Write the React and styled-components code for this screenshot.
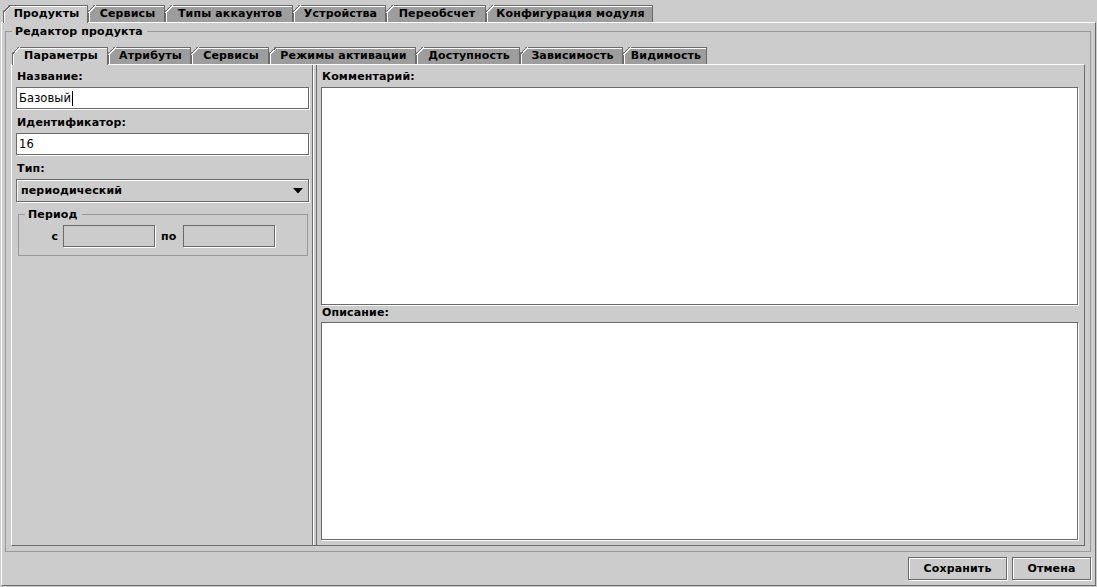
import React from 'react'
import styled, { createGlobalStyle } from 'styled-components'

const GlobalStyle = createGlobalStyle`
  html, body, #root { height: 100%; margin: 0; }
  body {
    background: #cccccc;
    font-family: "DejaVu Sans", "Liberation Sans", sans-serif;
    font-size: 11px;
    letter-spacing: 0.15px;
    color: #000;
  }
  * { box-sizing: border-box; }
`

const DARK = '#6a6a6a'

const Window = styled.div`
  height: 100%;
  display: flex;
  flex-direction: column;
  padding: 0 1px 1px 1px;
`

const TabPane = styled.div`
  flex: 1;
  min-height: 0;
  display: flex;
  flex-direction: column;
`

const TabStrip = styled.div`
  display: flex;
  align-items: flex-end;
  height: ${p => p.$top + 17}px;
  padding: ${p => p.$top}px 0 0 ${p => p.$left}px;
`

const Tab = styled.div`
  position: relative;
  z-index: ${p => (p.$active ? 2 : 1)};
  width: ${p => p.$w}px;
  height: ${p => (p.$active ? 18 : 17)}px;
  margin-bottom: ${p => (p.$active ? -1 : 0)}px;
  background: ${p => (p.$active ? '#cccccc' : '#9d9d9d')};
  border: 1px solid ${DARK};
  border-bottom: none;
  box-shadow: inset 1px 1px 0 #fff;
  clip-path: polygon(0 6px, 6px 0, 100% 0, 100% 100%, 0 100%);
  display: flex;
  align-items: center;
  justify-content: center;
  padding: 0 0 ${p => (p.$active ? 2 : 1)}px 2px;
  font-weight: bold;
  font-size: 11px;
  white-space: nowrap;

  &::before {
    content: '';
    position: absolute;
    left: -1px;
    top: -1px;
    width: 8px;
    height: 8px;
    background: linear-gradient(
      to bottom right,
      transparent 40%,
      ${DARK} 40%,
      ${DARK} 50%,
      #fff 50%,
      #fff 60%,
      transparent 60%
    );
  }
`

const TabContent = styled.div`
  flex: 1;
  min-height: 0;
  display: flex;
  flex-direction: ${p => p.$dir || 'column'};
  border: 1px solid;
  border-color: #fff ${DARK} ${DARK} #fff;
  padding: ${p => p.$pad || '0'};
`

const Group = styled.fieldset`
  flex: ${p => (p.$grow ? 1 : 'none')};
  min-width: 0;
  min-height: 0;
  margin: ${p => p.$margin || '0'};
  border: 1px solid #999999;
  padding: ${p => p.$pad};
  display: flex;
  flex-direction: column;
`

const GroupTitle = styled.legend`
  font-weight: bold;
  font-size: 11px;
  line-height: 15px;
  padding: 0 4px 0 3px;
  margin-left: ${p => p.$shift || 0}px;
`

const LeftPanel = styled.div`
  width: 301px;
  flex: none;
  border-right: 1px solid ${DARK};
  padding: 4px 3px 0 4px;
  display: flex;
  flex-direction: column;
`

const Divider = styled.div`
  width: 4px;
  flex: none;
  border-left: 1px solid #fff;
  border-right: 1px solid ${DARK};
`

const RightPanel = styled.div`
  flex: 1;
  min-width: 0;
  padding: 4px 6px 5px 4px;
  display: flex;
  flex-direction: column;
`

const Label = styled.div`
  font-weight: bold;
  font-size: 11px;
  line-height: 14px;
  padding: 1px 0 0 1px;
  margin: ${p => p.$margin || '0 0 3px 0'};
  white-space: nowrap;
`

const FieldBlock = styled.div`
  margin-bottom: 6px;
`

const TextField = styled.div`
  height: 22px;
  width: ${p => (p.$w ? `${p.$w}px` : '100%')};
  background: ${p => (p.$disabled ? '#cccccc' : '#ffffff')};
  border: 1px solid ${DARK};
  box-shadow: 1px 1px 0 #fff;
  display: flex;
  align-items: center;
  padding-left: 2px;
  font-size: 11.5px;
  letter-spacing: 0.1px;
  white-space: nowrap;
`

const Caret = styled.span`
  display: inline-block;
  width: 1px;
  height: 15px;
  background: #000;
  margin-left: 1px;
`

const Combo = styled.div`
  height: 23px;
  background: #cccccc;
  border: 1px solid ${DARK};
  box-shadow: inset 1px 1px 0 #fff, 1px 1px 0 #fff;
  display: flex;
  align-items: center;
  justify-content: space-between;
  padding: 0 5px 0 4px;
  font-weight: bold;
  font-size: 11px;
`

const PeriodRow = styled.div`
  display: flex;
  align-items: center;
  justify-content: center;
  gap: 5px;
`

const PeriodLabel = styled.span`
  font-weight: bold;
  font-size: 11px;
  margin-right: ${p => p.$gap || 0}px;
  margin-left: ${p => p.$lead || 0}px;
`

const TextArea = styled.textarea`
  flex: 1;
  min-height: 0;
  width: 100%;
  resize: none;
  outline: none;
  background: #fff;
  border: 1px solid ${DARK};
  box-shadow: 1px 1px 0 #fff;
  font-family: inherit;
  font-size: 11.5px;
  margin: 0;
`

const ButtonRow = styled.div`
  display: flex;
  justify-content: flex-end;
  gap: 5px;
  margin: 5px 0 0 0;
`

const Button = styled.button`
  height: 23px;
  width: ${p => p.$w}px;
  padding: 0;
  background: #cccccc;
  border: 1px solid ${DARK};
  box-shadow: inset 1px 1px 0 #fff, 1px 1px 0 #fff;
  font-family: inherit;
  font-weight: bold;
  font-size: 11px;
  letter-spacing: 0.15px;
  color: #000;
`

const ArrowDown = () => (
  <svg width="10" height="6" viewBox="0 0 10 6">
    <path d="M0 0 H10 L5 5.5 Z" fill="#000" />
  </svg>
)

const outerTabs = [
  ['Продукты', 85],
  ['Сервисы', 77],
  ['Типы аккаунтов', 128],
  ['Устройства', 93],
  ['Переобсчет', 100],
  ['Конфигурация модуля', 167],
]

const innerTabs = [
  ['Параметры', 96],
  ['Атрибуты', 83],
  ['Сервисы', 78],
  ['Режимы активации', 147],
  ['Доступность', 104],
  ['Зависимость', 103],
  ['Видимость', 84],
]

const Tabs = ({ items, top, left }) => (
  <TabStrip $top={top} $left={left}>
    {items.map(([name, w], i) => (
      <Tab key={name} $w={w} $active={i === 0}>{name}</Tab>
    ))}
  </TabStrip>
)

const App = () => {
  return (
    <Window>
      <GlobalStyle />
      <TabPane>
        <Tabs items={outerTabs} top={5} left={2} />
        <TabContent $pad="1px 4px 5px 3px">
          <Group $grow $pad="8px 5px 5px 5px">
            <GroupTitle $shift={1}>Редактор продукта</GroupTitle>
            <TabPane>
              <Tabs items={innerTabs} top={0} left={1} />
              <TabContent $dir="row">
                <LeftPanel>
                  <FieldBlock>
                    <Label>Название:</Label>
                    <TextField>Базовый<Caret /></TextField>
                  </FieldBlock>
                  <FieldBlock>
                    <Label>Идентификатор:</Label>
                    <TextField>16</TextField>
                  </FieldBlock>
                  <FieldBlock>
                    <Label>Тип:</Label>
                    <Combo>
                      <span>периодический</span>
                      <ArrowDown />
                    </Combo>
                  </FieldBlock>
                  <Group $margin="-1px 1px 0 2px" $pad="3px 6px 8px 6px">
                    <GroupTitle>Период</GroupTitle>
                    <PeriodRow>
                      <PeriodLabel>с</PeriodLabel>
                      <TextField $w={92} $disabled />
                      <PeriodLabel $lead={1} $gap={1}>по</PeriodLabel>
                      <TextField $w={92} $disabled />
                    </PeriodRow>
                  </Group>
                </LeftPanel>
                <Divider />
                <RightPanel>
                  <Label>Комментарий:</Label>
                  <TextArea />
                  <Label $margin="0 0 2px 0">Описание:</Label>
                  <TextArea />
                </RightPanel>
              </TabContent>
            </TabPane>
          </Group>
          <ButtonRow>
            <Button $w={99}>Сохранить</Button>
            <Button $w={79}>Отмена</Button>
          </ButtonRow>
        </TabContent>
      </TabPane>
    </Window>
  )
}

export default App
